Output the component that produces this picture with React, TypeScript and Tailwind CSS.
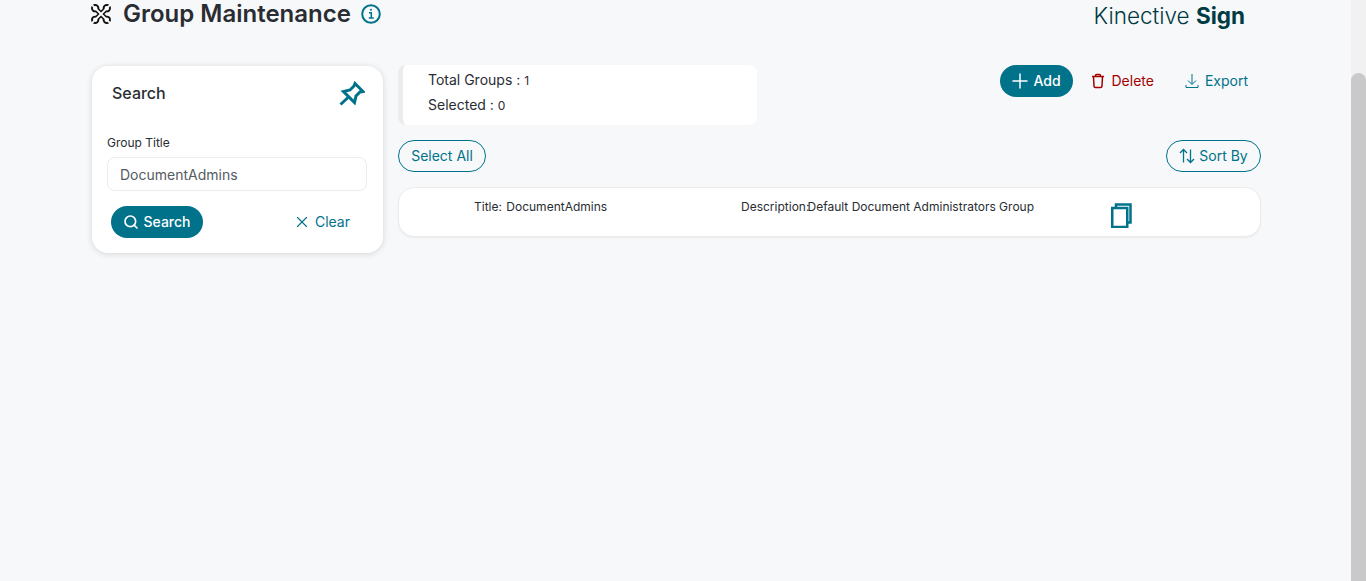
import { Plus, Search, X } from "lucide-react";

function ToolsIcon() {
  return (
    <svg width="20" height="20" viewBox="0 0 20 20" fill="none">
      <path d="M4 4 16 16M16 4 4 16" stroke="#111" strokeWidth="5" />
      <g stroke="#111" strokeWidth="1.900" fill="#fff">
        <circle cx="4.200" cy="4.200" r="3.200" />
        <circle cx="15.800" cy="4.200" r="3.200" />
        <circle cx="4.200" cy="15.800" r="3.200" />
        <circle cx="15.800" cy="15.800" r="3.200" />
      </g>
      <path d="M4.500 4.500 15.500 15.500M15.500 4.500 4.500 15.500" stroke="#fff" strokeWidth="1.800" />
      <path d="M0 0 3.800 3.800M20 0 16.200 3.800M0 20 3 17M20 20 17 17" stroke="#f7f8fa" strokeWidth="1.800" />
    </svg>
  );
}

function InfoIcon() {
  return (
    <svg width="20" height="20" viewBox="0 0 20 20" fill="none" stroke="#00728a">
      <circle cx="10" cy="10" r="8.800" strokeWidth="2" />
      <path d="M8 8.700h2.300v5M7.800 14h5" strokeWidth="1.500" />
      <circle cx="10" cy="5.700" r="1" fill="#00728a" stroke="none" />
    </svg>
  );
}

function PinIcon() {
  return (
    <svg width="26" height="25" viewBox="0 0 26 25" fill="none" stroke="#00728a" strokeWidth="3" strokeLinejoin="miter">
      <path d="M16 2.500 24 10.500 21 11 17 15 15.500 21.500 4.500 10.500 11 9 15 5Z" />
      <path d="M9 16.500 1.500 23.500" />
    </svg>
  );
}

function TrashIcon() {
  return (
    <svg width="14" height="16" viewBox="0 0 14 16" fill="none" stroke="#a50000" strokeWidth="1.500">
      <path d="M1 3.500h12M4.500 3.500v-1a1 1 0 0 1 1-1h3a1 1 0 0 1 1 1v1M2.500 3.500l.5 9.500a1.500 1.500 0 0 0 1.500 1.500h5a1.500 1.500 0 0 0 1.500-1.500l.5-9.500" />
    </svg>
  );
}

function ExportIcon() {
  return (
    <svg width="14" height="16" viewBox="0 0 14 16" fill="none" stroke="#00728a" strokeWidth="1">
      <path d="M7 1v10M3 7.500l4 4 4-4M1 12v2.500h12V12" />
    </svg>
  );
}

function SortIcon() {
  return (
    <svg width="16" height="16" viewBox="0 0 16 16" fill="none" stroke="#00728a" strokeWidth="1.300">
      <path d="M4.500 14.500v-13M1 5l3.500-3.500L8 5M11.500 1.500v13M8 11l3.500 3.500L15 11" />
    </svg>
  );
}

function CopyIcon() {
  return (
    <svg width="21" height="25" viewBox="0 0 21 25" fill="none" stroke="#00728a" strokeWidth="2.500">
      <path d="M5 4.500V1.500h14.500v18h-4" />
      <rect x="1.250" y="5" width="15" height="19" />
    </svg>
  );
}

export default function App() {
  return (
    <div className="flex h-[581px] w-full overflow-hidden bg-[#f7f8fa] font-['Inter',sans-serif]">
      <main className="flex-1 pl-[91px] pr-[90px]">
        <header className="flex h-[65px] items-start justify-between">
          <div className="flex h-[27px] items-center">
            <ToolsIcon />
            <h1 className="ml-3 text-2xl font-semibold leading-[27px] text-[#292d32]">Group Maintenance</h1>
            <span className="ml-[10px]"><InfoIcon /></span>
          </div>
          <div className="mr-4 pt-[2px] text-[22.5px] leading-[28px] text-[#003b44]">
            <span className="font-light">Kinective </span>
            <span className="font-bold">Sign</span>
          </div>
        </header>

        <div className="flex items-start gap-[15px]">
          <aside className="ml-px mt-px h-[187px] w-[291px] rounded-2xl bg-white pl-[15px] pr-4 shadow-[0_1px_6px_rgba(0,0,0,0.14)]">
            <div className="flex h-[54px] items-center justify-between pl-[5px] pr-[2px]">
              <h2 className="text-base font-medium text-[#292d32]">Search</h2>
              <PinIcon />
            </div>
            <label className="mt-[16px] block text-xs leading-[14px] text-[#292d32]">Group Title</label>
            <div className="mt-[7px] flex h-[34px] items-center rounded-lg border border-[#ececec] px-3 pt-[2px] text-sm text-[#555b63]">
              DocumentAdmins
            </div>
            <div className="mt-[15px] flex items-center justify-between pl-1 pr-[17px]">
              <button className="flex h-8 w-[92px] items-center justify-center gap-1 rounded-full bg-[#00728a] text-sm font-medium text-white">
                <Search size={16} strokeWidth={2.500} />
                Search
              </button>
              <button className="flex items-center gap-1 text-sm text-[#00728a]">
                <X size={18} strokeWidth={1.500} />
                Clear
              </button>
            </div>
          </aside>

          <section className="flex-1">
            <div className="flex items-start justify-between">
              <div className="flex h-[60px] w-[359px] flex-col gap-[7px] rounded-lg border-l-[5px] border-[#ececec] bg-white pl-[25px] pt-[6px] text-sm leading-[18px] text-[#292d32]">
                <div>Total Groups : <span className="text-xs">1</span></div>
                <div>Selected : <span className="text-xs">0</span></div>
              </div>
              <div className="flex items-center pr-[13px]">
                <button className="flex h-8 w-[73px] items-center gap-px rounded-full bg-[#00728a] pl-2 text-sm font-medium text-white">
                  <Plus size={24} strokeWidth={1.500} />
                  Add
                </button>
                <button className="ml-[18px] flex items-center gap-[6px] text-sm text-[#a50000]">
                  <TrashIcon />
                  Delete
                </button>
                <button className="ml-[31px] flex items-center gap-[6px] text-sm text-[#00728a]">
                  <ExportIcon />
                  Export
                </button>
              </div>
            </div>

            <div className="mt-[15px] flex items-center justify-between">
              <button className="h-8 w-[88px] rounded-full border border-[#00728a] text-sm text-[#00728a]">Select All</button>
              <button className="flex h-8 w-[95px] items-center justify-center gap-1 rounded-full border border-[#00728a] text-sm text-[#00728a]">
                <SortIcon />
                Sort By
              </button>
            </div>

            <div className="mt-[15px] flex h-[50px] items-start rounded-2xl border border-[#ececec] bg-white pl-[75px] shadow-[0_1px_2px_rgba(0,0,0,0.06)]">
              <div className="mt-[11px] w-[267px] text-xs leading-[15px] text-[#292d32]">Title:&nbsp;<span className="ml-px">DocumentAdmins</span></div>
              <div className="mt-[11px] flex w-[370px] text-xs leading-[15px] text-[#292d32]">
                <span className="w-[66.500px] whitespace-nowrap">Description:</span>
                <span>Default Document Administrators Group</span>
              </div>
              <div className="mt-[15px]"><CopyIcon /></div>
            </div>
          </section>
        </div>
      </main>

      <div className="flex h-full w-[15px] flex-col bg-[#f1f1f1] pt-[73px]">
        <div className="flex-1 rounded-t-lg bg-[#c9c9c9]" />
      </div>
    </div>
  );
}
